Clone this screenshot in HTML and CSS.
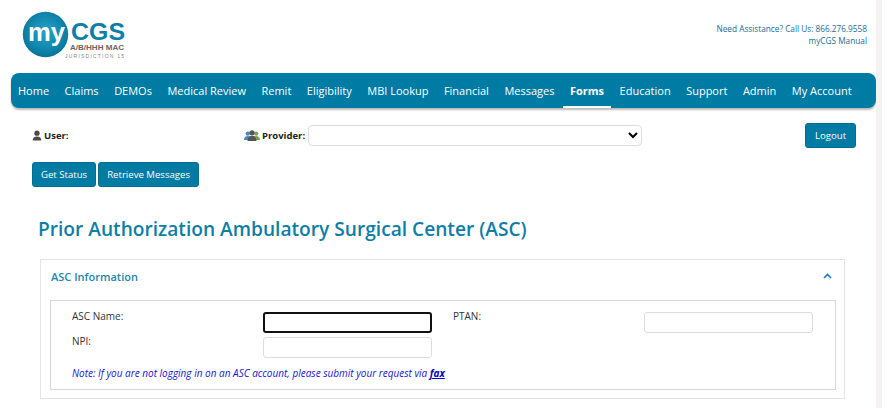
FILE: index.html
```html
<!DOCTYPE html>
<html lang="en">
<head>
    <meta charset="UTF-8">
    <title>myCGS - Prior Authorization ASC</title>
    <link rel="stylesheet" href="styles.css">
</head>
<body>
    <div class="page">
        <header class="top">
            <svg class="logo" width="120" height="50" viewBox="0 0 120 50" role="img" aria-label="myCGS">
                <defs>
                    <radialGradient id="ball" cx="50%" cy="45%" r="55%">
                        <stop offset="0" stop-color="#2aa3c6"/>
                        <stop offset="0.7" stop-color="#0f86ad"/>
                        <stop offset="1" stop-color="#0a7298"/>
                    </radialGradient>
                </defs>
                <circle cx="23.5" cy="23.5" r="22.7" fill="url(#ball)"/>
                <text x="6" y="30" class="logo-my" textLength="37" lengthAdjust="spacingAndGlyphs">my</text>
                <text x="49" y="29" class="logo-cgs" textLength="54" lengthAdjust="spacingAndGlyphs">CGS</text>
                <text x="48" y="39" class="logo-mac" textLength="54" lengthAdjust="spacingAndGlyphs">A/B/HHH MAC</text>
                <text x="43" y="46.5" class="logo-jur" textLength="59">JURISDICTION 15</text>
            </svg>
            <div class="help">
                <div>Need Assistance? Call Us: 866.276.9558</div>
                <div>myCGS Manual</div>
            </div>
        </header>

        <nav class="menu">
            <a href="#">Home</a>
            <a href="#">Claims</a>
            <a href="#">DEMOs</a>
            <a href="#">Medical Review</a>
            <a href="#">Remit</a>
            <a href="#">Eligibility</a>
            <a href="#">MBI Lookup</a>
            <a href="#">Financial</a>
            <a href="#">Messages</a>
            <a href="#" class="active">Forms</a>
            <a href="#">Education</a>
            <a href="#">Support</a>
            <a href="#">Admin</a>
            <a href="#">My Account</a>
        </nav>

        <div class="user-row">
            <div class="user">
                <svg width="10" height="11" viewBox="0 0 11 12"><circle cx="5.5" cy="3.4" r="2.9" fill="#4a4a4a"/><path d="M0.8 11.5c0-3 1.6-4.4 4.7-4.4s4.7 1.4 4.7 4.4z" fill="#4a4a4a"/></svg>
                <b>User:</b>
            </div>
            <div class="provider">
                <svg width="16" height="11" viewBox="0 0 16 11"><circle cx="3.8" cy="3.6" r="2.2" fill="#4a86c8"/><path d="M0 10c0-2.8 1.5-4 3.8-4s3.8 1.2 3.8 4z" fill="#4a86c8"/><circle cx="12.2" cy="3.6" r="2.2" fill="#7aa34f"/><path d="M8.4 10c0-2.8 1.5-4 3.8-4s3.8 1.2 3.8 4z" fill="#7aa34f"/><circle cx="8" cy="2.8" r="2.6" fill="#555"/><path d="M3.5 11c0-3.5 1.8-5.2 4.5-5.2s4.5 1.7 4.5 5.2z" fill="#555"/></svg>
                <b>Provider:</b>
                <select class="provider-select"><option></option></select>
            </div>
            <button class="btn logout">Logout</button>
        </div>

        <div class="actions">
            <button class="btn">Get Status</button>
            <button class="btn">Retrieve Messages</button>
        </div>

        <h1>Prior Authorization Ambulatory Surgical Center (ASC)</h1>

        <section class="panel">
            <div class="panel-head">
                <span>ASC Information</span>
                <svg width="9" height="6" viewBox="0 0 9 6"><path d="M1 5l3.5-3.5L8 5" fill="none" stroke="#1f7fd0" stroke-width="1.7"/></svg>
            </div>
            <div class="panel-body">
                <div class="fields">
                    <label>ASC Name:</label>
                    <input type="text" class="focused">
                    <label class="second">PTAN:</label>
                    <input type="text">
                    <label>NPI:</label>
                    <input type="text">
                </div>
                <p class="note">Note: If you are not logging in on an ASC account, please submit your request via <a href="#">fax</a></p>
            </div>
        </section>
    </div>
</body>
</html>
```

FILE: styles.css
```css
html, body {
    margin: 0;
    height: 100%;
    overflow: hidden;
    background-color: white;
}
body {
    font-family: "Open Sans", "Noto Sans", sans-serif;
    font-size: 9.5px;
    color: #333;
}
.page {
    width: 876px;
    height: 408px;
    box-shadow: 6px 0 0 #f5f3f1;
    overflow: hidden;
    background-color: white;
}
.top {
    display: flex;
    justify-content: space-between;
    height: 73px;
    padding: 11px 9px 0 22px;
    box-sizing: border-box;
}
.logo-my {
    font-family: "Liberation Sans", sans-serif;
    font-size: 26px;
    font-weight: bold;
    fill: white;
}
.logo-cgs {
    font-family: "Liberation Sans", sans-serif;
    font-size: 23px;
    font-weight: bold;
    fill: #0d7ea6;
}
.logo-mac {
    font-family: "Liberation Sans", sans-serif;
    font-size: 7px;
    font-weight: bold;
    fill: #6f6360;
}
.logo-jur {
    font-family: "Liberation Sans", sans-serif;
    font-size: 5px;
    fill: #8f8580;
}
.help {
    text-align: right;
    color: #1c6c9c;
    font-size: 8.25px;
    line-height: 12px;
    padding-top: 12px;
}
.menu {
    display: flex;
    height: 35px;
    margin-left: 11px;
    gap: 1.5px;
    background-color: #007ba4;
    border-radius: 8px;
    box-shadow: 0 2px 2px #bbb;
}
.menu a {
    display: flex;
    align-items: center;
    padding: 0 7px 1px;
    color: white;
    text-decoration: none;
    font-size: 11px;
    white-space: nowrap;
}
.menu a.active {
    font-weight: bold;
    border-bottom: 2px solid white;
    padding: 1px 7px 0;
}
.user-row {
    display: flex;
    align-items: center;
    height: 25px;
    margin-top: 15px;
    padding-left: 32px;
}
.user, .provider {
    display: flex;
    align-items: center;
    gap: 2px;
    color: #222;
}
.user {
    width: 212px;
}
.provider-select {
    width: 334px;
    height: 21px;
    margin-left: 1px;
    border: 1px solid #ddd;
    border-radius: 4px;
    background-color: white;
}
.btn {
    height: 25px;
    padding: 0 8px;
    background-color: #007ba4;
    color: white;
    border: 1px solid #006d92;
    border-radius: 3px;
    font-family: inherit;
    font-size: 9.6px;
}
.logout {
    width: 51px;
    margin-left: 163px;
    padding: 0;
}
.actions {
    display: flex;
    gap: 2px;
    margin-top: 14px;
    padding-left: 32px;
}
h1 {
    margin: 29px 0 0 38px;
    font-size: 19.15px;
    line-height: 26px;
    font-weight: 600;
    color: #0d7ea6;
}
.panel {
    width: 805px;
    height: 140px;
    box-sizing: border-box;
    margin: 17px 0 0 40px;
    border: 1px solid #e4e4e4;
}
.panel-head {
    display: flex;
    justify-content: space-between;
    align-items: center;
    height: 40px;
    padding: 0 12px 8px 10px;
    box-sizing: border-box;
    color: #1b87ab;
    font-size: 11px;
    font-weight: 600;
}
.panel-body {
    margin-left: 9px;
    width: 786px;
    height: 90px;
    box-sizing: border-box;
    border: 1px solid #d8d8d8;
    padding: 11px 0 0 21px;
}
.fields {
    display: grid;
    grid-template-columns: 191px 169px 212px 169px;
    row-gap: 4px;
}
.fields label {
    margin-top: -3px;
    font-size: 10px;
    line-height: 14px;
}
.fields label.second {
    padding-left: 21px;
}
.fields input {
    height: 21px;
    box-sizing: border-box;
    border: 1px solid #ddd;
    border-radius: 3px;
    background-color: white;
}
.fields input.focused {
    border: 2px solid #111;
}
.note {
    margin: 8px 0 0;
    font-size: 10px;
    font-style: italic;
    color: #1515d8;
}
.note a {
    color: #0000c8;
    font-weight: bold;
}
```
